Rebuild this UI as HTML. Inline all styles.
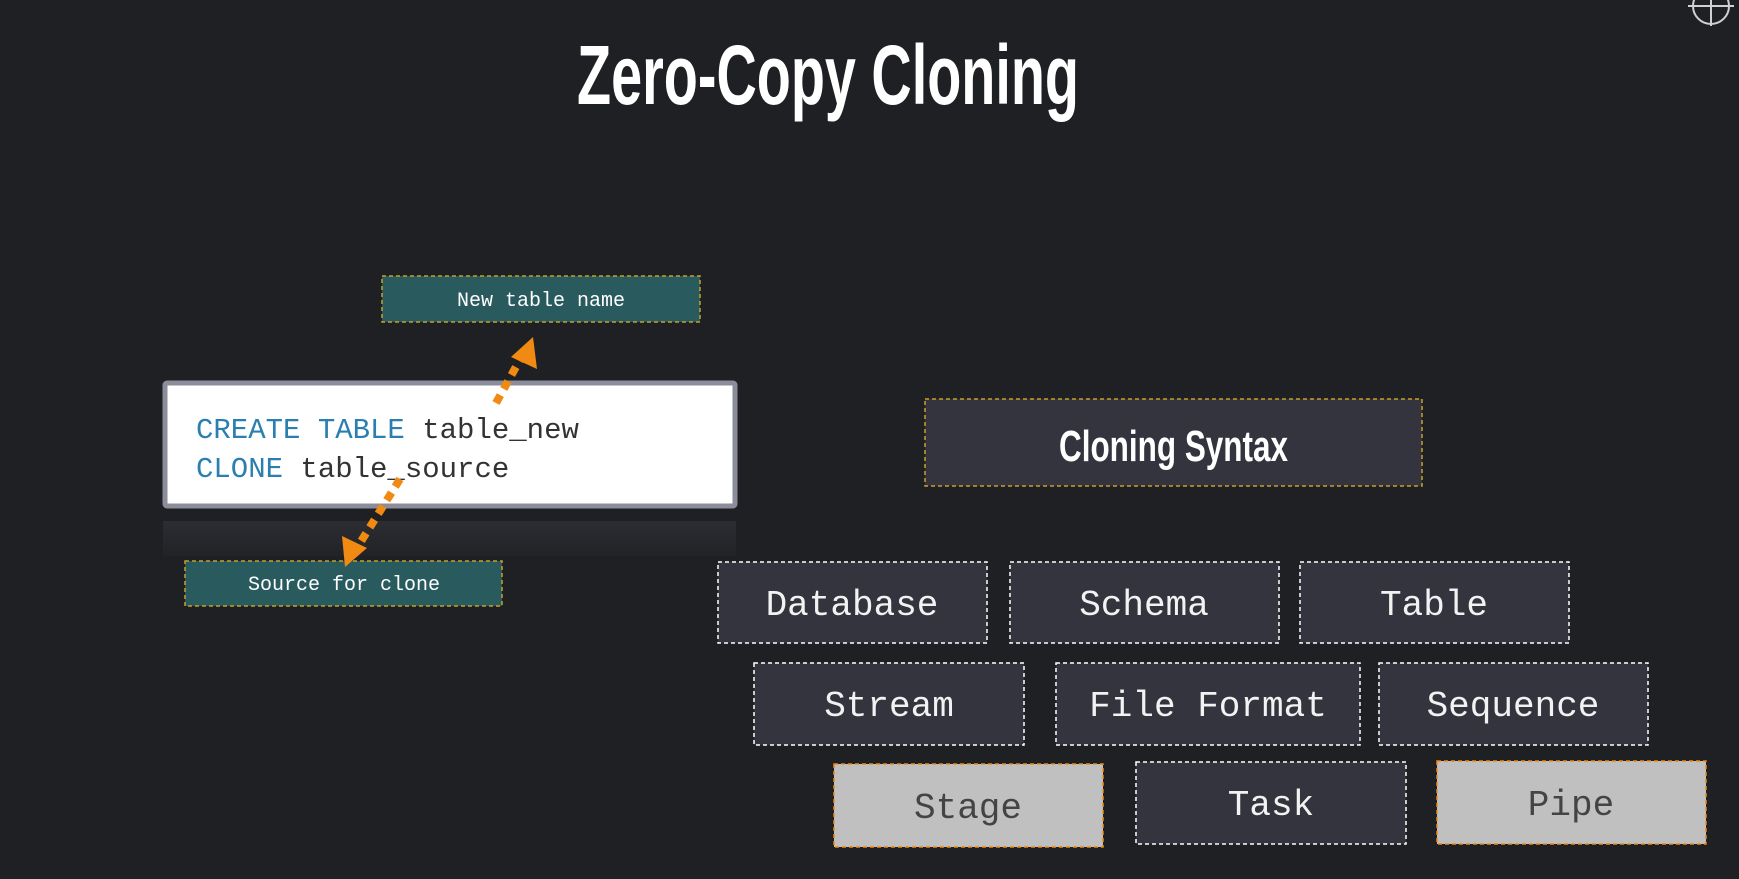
<!DOCTYPE html>
<html><head><meta charset="utf-8"><style>
html,body{margin:0;padding:0;background:#1f2023;width:1739px;height:879px;overflow:hidden}
svg{display:block}
</style></head><body>
<svg width="1739" height="879" viewBox="0 0 1739 879" xmlns="http://www.w3.org/2000/svg">
<defs><linearGradient id="g" x1="0" y1="0" x2="0" y2="1"><stop offset="0" stop-color="#2c2d32"/><stop offset="1" stop-color="#222327"/></linearGradient></defs>
<rect width="1739" height="879" fill="#1f2023"/>
<circle cx="1711" cy="6" r="18" fill="none" stroke="#cfd0d4" stroke-width="2"/>
<line x1="1688" y1="6" x2="1734" y2="6" stroke="#cfd0d4" stroke-width="2"/>
<line x1="1711" y1="0" x2="1711" y2="26" stroke="#cfd0d4" stroke-width="2"/>

<text x="577" y="104" font-family="Liberation Sans, sans-serif" font-weight="bold" font-size="84" fill="#fff" textLength="502" lengthAdjust="spacingAndGlyphs">Zero-Copy Cloning</text>

<rect x="382" y="276" width="318" height="46" fill="#285a5e" stroke="#c8a02a" stroke-width="1.5" stroke-dasharray="4 3"/>
<text x="541" y="306" text-anchor="middle" font-family="Liberation Mono, monospace" font-size="20" fill="#fff">New table name</text>

<rect x="163" y="521" width="573" height="35" fill="url(#g)"/>
<rect x="165" y="383" width="570" height="123" fill="#fff" stroke="#8b8e9a" stroke-width="5" rx="2"/>
<text x="196" y="438" font-family="Liberation Mono, monospace" font-size="29" fill="#2a7fb0">CREATE TABLE <tspan fill="#333">table_new</tspan></text>
<text x="196" y="477" font-family="Liberation Mono, monospace" font-size="29" fill="#2a7fb0">CLONE <tspan fill="#333">table_source</tspan></text>

<rect x="185" y="561" width="317" height="45" fill="#285a5e" stroke="#c8a02a" stroke-width="1.5" stroke-dasharray="4 3"/>
<text x="344" y="590" text-anchor="middle" font-family="Liberation Mono, monospace" font-size="20" fill="#fff">Source for clone</text>

<line x1="496" y1="403" x2="522" y2="356" stroke="#f08a12" stroke-width="8" stroke-dasharray="9 7"/>
<polygon points="533,337 537,369 511,357" fill="#f08a12"/>
<line x1="400" y1="479" x2="360" y2="543" stroke="#f08a12" stroke-width="8" stroke-dasharray="9 7"/>
<polygon points="345,567 342,536 367,548" fill="#f08a12"/>

<rect x="925" y="399" width="497" height="87" fill="#33343d" stroke="#c8a02a" stroke-width="1.5" stroke-dasharray="4 3"/>
<text x="1059" y="461" font-family="Liberation Sans, sans-serif" font-weight="bold" font-size="44" fill="#fff" textLength="229" lengthAdjust="spacingAndGlyphs">Cloning Syntax</text>

<g font-family="Liberation Mono, monospace" font-size="36" text-anchor="middle" stroke-width="1.5" stroke-dasharray="4 3">
<rect x="718" y="562" width="269" height="81" fill="#33343d" stroke="#fff"/>
<text x="852" y="615" fill="#f2f2f2" stroke="none">Database</text>
<rect x="1010" y="562" width="269" height="81" fill="#33343d" stroke="#fff"/>
<text x="1144" y="615" fill="#f2f2f2" stroke="none">Schema</text>
<rect x="1300" y="562" width="269" height="81" fill="#33343d" stroke="#fff"/>
<text x="1434" y="615" fill="#f2f2f2" stroke="none">Table</text>

<rect x="754" y="663" width="270" height="82" fill="#33343d" stroke="#fff"/>
<text x="889" y="716" fill="#f2f2f2" stroke="none">Stream</text>
<rect x="1056" y="663" width="304" height="82" fill="#33343d" stroke="#fff"/>
<text x="1208" y="716" fill="#f2f2f2" stroke="none">File Format</text>
<rect x="1379" y="663" width="269" height="82" fill="#33343d" stroke="#fff"/>
<text x="1513" y="716" fill="#f2f2f2" stroke="none">Sequence</text>

<rect x="834" y="764" width="269" height="83" fill="#c0c0c0" stroke="#f08a12"/>
<text x="968" y="818" fill="#444" stroke="none">Stage</text>
<rect x="1136" y="762" width="270" height="82" fill="#33343d" stroke="#fff"/>
<text x="1271" y="815" fill="#f2f2f2" stroke="none">Task</text>
<rect x="1437" y="761" width="269" height="83" fill="#c0c0c0" stroke="#f08a12"/>
<text x="1571" y="815" fill="#444" stroke="none">Pipe</text>
</g>
</svg>
</body></html>
